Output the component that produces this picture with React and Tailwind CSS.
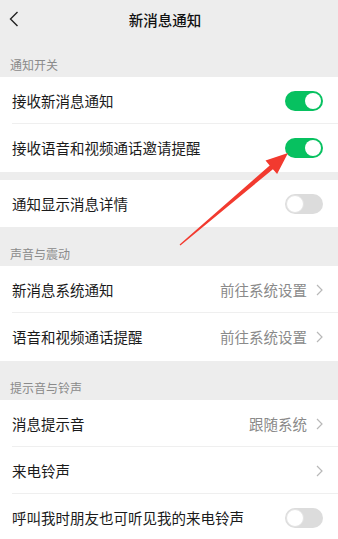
import React from "react";

const font = { fontFamily: '"Noto Sans CJK SC", "Noto Sans", sans-serif' };

function Toggle({ on }) {
  return on ? (
    <div className="w-[38px] h-[20px] rounded-full bg-[#07c160] flex items-center justify-end pr-[2px]">
      <div className="w-[16px] h-[16px] rounded-full bg-white" />
    </div>
  ) : (
    <div className="w-[38px] h-[20px] rounded-full bg-[#dcdcdc] flex items-center pl-[1px]">
      <div className="w-[18px] h-[18px] rounded-full bg-white border border-[#e3e3e3]" />
    </div>
  );
}

function Chevron() {
  return (
    <svg width="7" height="12" viewBox="0 0 7 12" className="ml-[9px]">
      <path d="M1 1 L6 6 L1 11" fill="none" stroke="#b8b8b8" strokeWidth="1.2" />
    </svg>
  );
}

function Row({ label, value, toggle, chevron, divider, h = "h-[47px]" }) {
  return (
    <div className={`${h} bg-white relative flex items-center pl-[12px] pr-[15px]`}>
      <div className="flex-1 text-[14.5px] text-[#1b1b1b]">{label}</div>
      {value && <div className="text-[14.5px] text-[#8a8a8a]">{value}</div>}
      {chevron && <Chevron />}
      {toggle !== undefined && <Toggle on={toggle} />}
      {divider && <div className="absolute left-[12px] right-0 bottom-0 h-px bg-[#efefef]" />}
    </div>
  );
}

function Section({ title }) {
  return (
    <div className="h-[39px] flex items-end pb-[3px] pl-[10px] text-[12px] text-[#8a8a8a]">
      {title}
    </div>
  );
}

export default function App() {
  return (
    <div className="w-[338px] h-[539px] bg-[#ededed] relative overflow-hidden" style={font}>
      <div className="h-[38px] relative flex items-center justify-center">
        <svg width="10" height="16" viewBox="0 0 10 16" className="absolute left-[9px] top-[11px]">
          <path d="M8.5 1 L1.5 8 L8.5 15" fill="none" stroke="#222" strokeWidth="1.4" />
        </svg>
        <div className="text-[14.5px] font-medium text-[#111] -ml-[8px] mt-[2px]">新消息通知</div>
      </div>
      <Section title="通知开关" />
      <Row label="接收新消息通知" toggle={true} divider />
      <Row label="接收语音和视频通话邀请提醒" toggle={true} h="h-[48px]" />
      <div className="h-[8px]" />
      <Row label="通知显示消息详情" toggle={false} />
      <Section title="声音与震动" />
      <Row label="新消息系统通知" value="前往系统设置" chevron divider />
      <Row label="语音和视频通话提醒" value="前往系统设置" chevron h="h-[48px]" />
      <Section title="提示音与铃声" />
      <Row label="消息提示音" value="跟随系统" chevron divider />
      <Row label="来电铃声" chevron divider />
      <Row label="呼叫我时朋友也可听见我的来电铃声" toggle={false} />
      <svg className="absolute left-0 top-0 pointer-events-none" width="338" height="539" viewBox="0 0 338 539">
        <polygon
          points="288,153 277.1,174.1 272.9,169.2 180.4,245.5 179.6,244.5 269.7,165.4 265.5,160.5"
          fill="#f23a2f"
        />
      </svg>
    </div>
  );
}
